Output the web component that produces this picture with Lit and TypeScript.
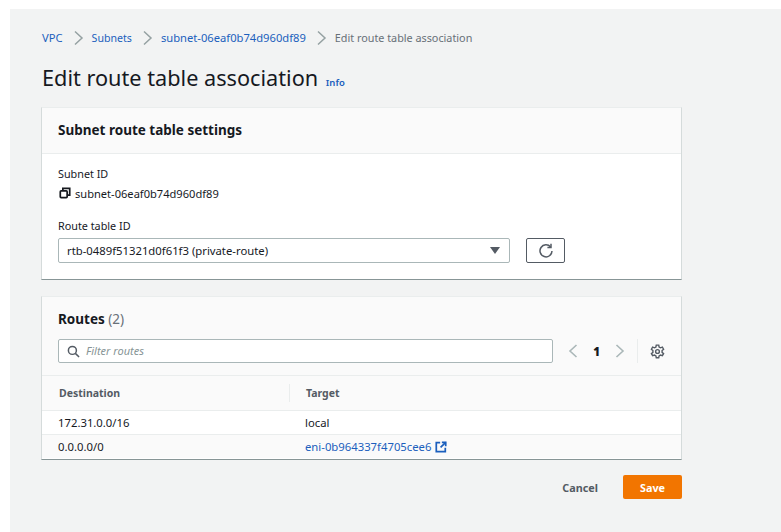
import { LitElement, html, css } from 'lit';
import { customElement } from 'lit/decorators.js';

const chevron = html`<svg class="crumb-sep" viewBox="0 0 16 16" width="16" height="16"><path d="M5 1.5 12 8l-7 6.5" fill="none" stroke="#95a1a2" stroke-width="1.5"/></svg>`;

@customElement('app-root')
export class AppRoot extends LitElement {
  static styles = css`
    :host {
      display: block;
      background: #fff;
      font-family: 'Noto Sans', 'Open Sans', sans-serif;
      font-size: 11px;
      color: #16191f;
    }
    .page {
      margin: 9px 0 0 10px;
      height: 523px;
      box-sizing: border-box;
      background: #f2f3f3;
      padding: 21px 99px 0 32px;
    }
    .crumbs {
      display: flex;
      align-items: center;
      height: 16px;
      line-height: 16px;
    }
    .crumbs a { color: #1b5fbd; }
    .crumbs .vpc { font-size: 11.2px; }
    .crumbs .subnets { font-size: 10.6px; }
    .crumbs .id { font-size: 11.2px; }
    .crumb-sep { margin: 0 6px 0 7px; }
    .crumbs .current { color: #687078; font-size: 10.8px; }
    h1 {
      margin: 16px 0 0;
      font-size: 21.7px;
      font-weight: 400;
      line-height: 32px;
      height: 32px;
    }
    h1 small {
      font-size: 9.5px;
      font-weight: 600;
      color: #1b5fbd;
      margin-left: 2px;
    }
    .card {
      background: #fff;
      border: 1px solid #d5dbdb;
      border-top-color: #eaeded;
      border-bottom-color: #879596;
      margin-left: -1px;
      box-sizing: border-box;
    }
    .card.settings { margin-top: 13px; height: 173px; }
    .card.routes { margin-top: 16px; height: 164px; }
    .card-head {
      height: 46px;
      box-sizing: border-box;
      background: #fafafa;
      border-bottom: 1px solid #eaeded;
      padding: 0 16px 2px;
      display: flex;
      align-items: center;
    }
    h2 { margin: 0; font-size: 13.5px; font-weight: 700; }
    .card-body { padding: 12px 16px 0; }
    .label { line-height: 16px; height: 16px; font-size: 10.8px; }
    .copy {
      display: flex;
      align-items: center;
      gap: 4px;
      height: 18px;
      margin-top: 2px;
      font-size: 11.1px;
    }
    .copy svg { margin-left: 1px; }
    .label.route { margin-top: 16px; }
    .select-row { display: flex; gap: 16px; margin-top: 4px; }
    .select {
      width: 452px;
      height: 25px;
      box-sizing: border-box;
      border: 1px solid #aab7b8;
      border-radius: 2px;
      padding: 0 9px 0 8px;
      display: flex;
      align-items: center;
      justify-content: space-between;
      font-size: 11.3px;
    }
    .caret {
      width: 0;
      height: 0;
      border-left: 5px solid transparent;
      border-right: 5px solid transparent;
      border-top: 7px solid #545b64;
    }
    .refresh {
      width: 39px;
      height: 25px;
      box-sizing: border-box;
      border: 1px solid #545b64;
      border-radius: 2px;
      display: flex;
      align-items: center;
      justify-content: center;
    }
    .routes-head {
      background: #fafafa;
      height: 79px;
      box-sizing: border-box;
      padding: 14px 16px 0;
      border-bottom: 1px solid #eaeded;
    }
    .routes-head h2 { line-height: 16px; }
    .routes-head h2 span { font-weight: 400; color: #687078; }
    .tools { display: flex; align-items: center; margin-top: 12px; height: 24px; }
    .filter {
      width: 495px;
      height: 24px;
      box-sizing: border-box;
      background: #fff;
      border: 1px solid #aab7b8;
      border-radius: 2px;
      display: flex;
      align-items: center;
      padding-left: 8px;
      gap: 6px;
      color: #879596;
      font-style: italic;
      font-size: 11px;
    }
    .filter span { padding-bottom: 2px; }
    .pager {
      display: flex;
      align-items: center;
      margin-left: 14px;
      height: 24px;
      font-size: 11.5px;
      font-weight: 700;
    }
    .pager b { width: 35px; text-align: center; }
    .divider { width: 1px; height: 24px; background: #eaeded; margin: 0 12px 0 11px; }
    table { width: 100%; border-collapse: collapse; table-layout: fixed; }
    th {
      height: 34px;
      padding: 0 0 0 17px;
      background: #fafafa;
      text-align: left;
      font-weight: 700;
      font-size: 10.5px;
      color: #545b64;
      border-bottom: 1px solid #eaeded;
      position: relative;
    }
    th + th::before {
      content: '';
      position: absolute;
      left: 0;
      top: 8px;
      height: 18px;
      width: 1px;
      background: #eaeded;
    }
    td {
      height: 23px;
      padding: 0 0 0 16px;
      border-bottom: 1px solid #eaeded;
      font-size: 11.3px;
    }
    tr:last-child td { border-bottom: 0; background: #fafafa; }
    .col-a { width: 230px; }
    td a { color: #1b5fbd; display: inline-flex; align-items: center; gap: 4px; }
    .actions {
      display: flex;
      justify-content: flex-end;
      align-items: center;
      margin-top: 15px;
    }
    .cancel { font-weight: 700; font-size: 10.8px; color: #545b64; margin-right: 25px; }
    .save {
      width: 59px;
      height: 24px;
      border-radius: 2px;
      background: #f27500;
      color: #fff;
      font-weight: 700;
      font-size: 10.8px;
      display: flex;
      align-items: center;
      justify-content: center;
    }
  `;

  render() {
    return html`
      <div class="page">
        <nav class="crumbs">
          <a class="vpc">VPC</a>${chevron}<a class="subnets">Subnets</a>${chevron}<a class="id">subnet-06eaf0b74d960df89</a>${chevron}<span class="current">Edit route table association</span>
        </nav>
        <h1>Edit route table association <small>Info</small></h1>

        <section class="card settings">
          <div class="card-head"><h2>Subnet route table settings</h2></div>
          <div class="card-body">
            <div class="label">Subnet ID</div>
            <div class="copy">
              <svg viewBox="0 0 14 14" width="12" height="12" fill="none" stroke="#16191f" stroke-width="2"><rect x="1.5" y="4.5" width="8" height="8" rx="1"/><path d="M4.5 3.5V1.5h8v8h-2"/></svg>
              <span>subnet-06eaf0b74d960df89</span>
            </div>
            <div class="label route">Route table ID</div>
            <div class="select-row">
              <div class="select"><span>rtb-0489f51321d0f61f3 (private-route)</span><i class="caret"></i></div>
              <div class="refresh">
                <svg viewBox="0 0 16 16" width="16" height="16" fill="none" stroke="#545b64" stroke-width="1.5"><path d="M12.6 4A6 6 0 1 0 14 8"/><path d="M13 .8V4.4H9.4"/></svg>
              </div>
            </div>
          </div>
        </section>

        <section class="card routes">
          <div class="routes-head">
            <h2>Routes <span>(2)</span></h2>
            <div class="tools">
              <div class="filter">
                <svg viewBox="0 0 14 14" width="13" height="13" fill="none" stroke="#545b64" stroke-width="1.6"><circle cx="5.8" cy="5.8" r="4.3"/><path d="m9 9 4 4"/></svg>
                <span>Filter routes</span>
              </div>
              <div class="pager">
                <svg viewBox="0 0 12 16" width="12" height="16" fill="none" stroke="#aab7b8" stroke-width="1.6"><path d="M9.5 2 3 8l6.5 6"/></svg>
                <b>1</b>
                <svg viewBox="0 0 12 16" width="12" height="16" fill="none" stroke="#aab7b8" stroke-width="1.6"><path d="M2.5 2 9 8l-6.5 6"/></svg>
                <span class="divider"></span>
                <svg viewBox="0 0 16 16" width="15" height="15" fill="none" stroke="#545b64" stroke-width="1.5"><circle cx="8" cy="8" r="2"/><path d="M6.7 1.2h2.6l.4 2 1.5.9 2-.7 1.3 2.2-1.6 1.4v1.9l1.6 1.4-1.3 2.2-2-.7-1.5.9-.4 2H6.7l-.4-2-1.5-.9-2 .7-1.3-2.2 1.6-1.4V7L1.5 5.6l1.3-2.2 2 .7 1.5-.9z"/></svg>
              </div>
            </div>
          </div>
          <table>
            <tr><th class="col-a">Destination</th><th>Target</th></tr>
            <tr><td>172.31.0.0/16</td><td>local</td></tr>
            <tr>
              <td>0.0.0.0/0</td>
              <td><a>eni-0b964337f4705cee6
                <svg viewBox="0 0 14 14" width="12" height="12" fill="none" stroke="#1b5fbd" stroke-width="2"><path d="M6 2H1.5v10.5H12V8"/><path d="M8 1.5h4.5V6"/><path d="M12.5 1.5 6.5 7.5"/></svg>
              </a></td>
            </tr>
          </table>
        </section>

        <div class="actions">
          <span class="cancel">Cancel</span>
          <div class="save">Save</div>
        </div>
      </div>
    `;
  }
}
